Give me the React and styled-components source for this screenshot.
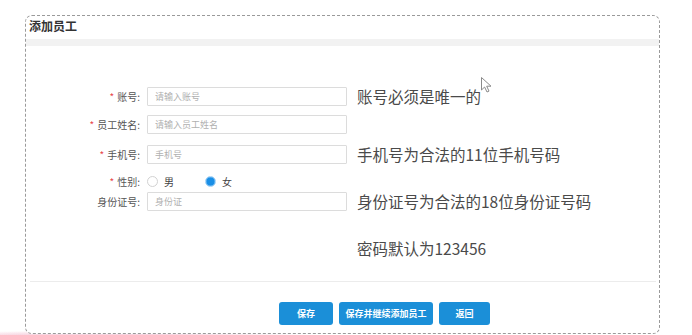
import React from "react";
import styled, { createGlobalStyle } from "styled-components";

const Global = createGlobalStyle`
  html, body { margin: 0; padding: 0; background: #fff; }
  body { font-family: "Noto Sans CJK SC", "Noto Sans", sans-serif; }
`;

const Page = styled.div`
  position: relative;
  width: 692px;
  height: 335px;
  overflow: hidden;
  padding: 15px 0 0 25px;
  box-sizing: border-box;
  background:
    radial-gradient(ellipse 170px 6px at 150px 335px, rgba(240,170,195,0.55), rgba(255,255,255,0) 100%),
    radial-gradient(ellipse 120px 5px at 30px 336px, rgba(240,170,195,0.5), rgba(255,255,255,0) 100%),
    #fff;
`;

const Frame = styled.div`
  width: 635px;
  height: 319px;
  box-sizing: border-box;
  border: 1px dashed #9a9a9a;
  border-radius: 7px;
  display: flex;
  flex-direction: column;
  background: #fff;
  overflow: hidden;
`;

const TitleBar = styled.div`
  height: 23px;
  line-height: 20px;
  padding-left: 3px;
  font-size: 12px;
  font-weight: 700;
  color: #333;
`;

const Band = styled.div`
  height: 7px;
  background: #f2f2f2;
`;

const Form = styled.div`
  flex: 1;
  padding-top: 41px;
  display: flex;
  flex-direction: column;
`;

const Row = styled.div`
  display: grid;
  grid-template-columns: 114px 200px auto;
  column-gap: 7px;
  align-items: center;
  height: ${(p) => p.$h || 19}px;
  margin-top: ${(p) => p.$mt || 0}px;
`;

const Label = styled.div`
  text-align: right;
  font-size: 10px;
  color: #555;
  white-space: nowrap;
`;

const Star = styled.span`
  color: #e8474a;
  margin-right: 3px;
`;

const Input = styled.input`
  box-sizing: border-box;
  width: 200px;
  height: 19px;
  border: 1px solid #dcdcdc;
  border-radius: 1px;
  padding: 0 7px;
  font-size: 9px;
  font-family: "Noto Sans CJK SC", sans-serif;
  color: #333;
  outline: none;
  &::placeholder { color: #b0b0b0; }
`;

const Hint = styled.div`
  margin-left: 3px;
  font-size: 15.5px;
  color: #4a4a4a;
  white-space: nowrap;
  line-height: 19px;
`;

const RadioGroup = styled.div`
  display: flex;
  align-items: center;
`;

const RadioItem = styled.label`
  display: flex;
  align-items: center;
  width: 58px;
  font-size: 10px;
  color: #444;
`;

const RadioDot = styled.span`
  box-sizing: border-box;
  width: 11px;
  height: 11px;
  border-radius: 50%;
  margin-right: 6px;
  border: 1px solid ${(p) => (p.$on ? "#9fd0f5" : "#d2d2d2")};
  background: ${(p) => (p.$on ? "radial-gradient(circle, #1a8fe6 0 3.6px, #4aa7ee 4px)" : "#fff")};
`;

const Footer = styled.div`
  margin: 0 3px 0 4px;
  border-top: 1px solid #ececec;
  padding: 20px 0 8px 249px;
  display: flex;
  gap: 6px;
`;

const Button = styled.button`
  width: ${(p) => p.$w}px;
  height: 23px;
  border: none;
  border-radius: 3px;
  background: #1b8fd8;
  color: #fff;
  font-size: 9px;
  font-weight: 700;
  font-family: "Noto Sans CJK SC", sans-serif;
  padding: 0;
  cursor: pointer;
`;

const Cursor = styled.svg`
  position: absolute;
  left: 480px;
  top: 76px;
`;

export default function App() {
  return (
    <Page>
      <Global />
      <Frame>
        <TitleBar>添加员工</TitleBar>
        <Band />
        <Form>
          <Row>
            <Label><Star>*</Star>账号:</Label>
            <Input placeholder="请输入账号" />
            <Hint>账号必须是唯一的</Hint>
          </Row>
          <Row $mt={9}>
            <Label><Star>*</Star>员工姓名:</Label>
            <Input placeholder="请输入员工姓名" />
            <div />
          </Row>
          <Row $mt={11}>
            <Label><Star>*</Star>手机号:</Label>
            <Input placeholder="手机号" />
            <Hint>手机号为合法的11位手机号码</Hint>
          </Row>
          <Row $mt={9} $h={16}>
            <Label><Star>*</Star>性别:</Label>
            <RadioGroup>
              <RadioItem><RadioDot />男</RadioItem>
              <RadioItem><RadioDot $on />女</RadioItem>
            </RadioGroup>
            <div />
          </Row>
          <Row $mt={3}>
            <Label>身份证号:</Label>
            <Input placeholder="身份证" />
            <Hint>身份证号为合法的18位身份证号码</Hint>
          </Row>
          <Row $mt={27} $h={20}>
            <div />
            <div />
            <Hint>密码默认为123456</Hint>
          </Row>
        </Form>
        <Footer>
          <Button $w={54}>保存</Button>
          <Button $w={94}>保存并继续添加员工</Button>
          <Button $w={51}>返回</Button>
        </Footer>
      </Frame>
      <Cursor width="14" height="18" viewBox="0 0 14 18">
        <path d="M1.5 1.5 L1.5 14 L4.6 11 L7 16 L9 15.1 L6.7 10.2 L11 10.2 Z" fill="#fff" stroke="#8a8a8a" strokeWidth="1" strokeLinejoin="round" />
      </Cursor>
    </Page>
  );
}
